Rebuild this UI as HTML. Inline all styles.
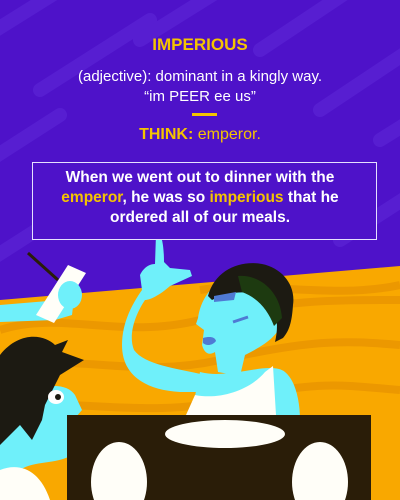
<!DOCTYPE html>
<html><head><meta charset="utf-8"><style>
body{margin:0;width:400px;height:500px;overflow:hidden;background:#4e12c9;font-family:"Liberation Sans",sans-serif;position:relative}
.t{position:absolute;left:0;width:400px;text-align:center;font-weight:bold}
</style></head><body>
<svg width="400" height="500" style="position:absolute;left:0;top:0">
<g stroke="#5a22d4" stroke-width="14" stroke-linecap="round" opacity="0.8">
<line x1="-20" y1="40" x2="60" y2="-10"/><line x1="40" y1="90" x2="150" y2="20"/><line x1="140" y1="40" x2="220" y2="-10"/><line x1="260" y1="50" x2="350" y2="-10"/><line x1="320" y1="110" x2="410" y2="50"/><line x1="-10" y1="160" x2="60" y2="115"/><line x1="340" y1="240" x2="410" y2="195"/><line x1="-10" y1="260" x2="40" y2="228"/><line x1="380" y1="140" x2="420" y2="115"/>
</g>
<polygon points="0,300 400,266 400,500 0,500" fill="#f9a800"/>
<g stroke="#ec9800" stroke-width="8" fill="none">
<path d="M0,330 C60,310 120,340 200,320 S330,300 400,300"/>
<path d="M0,370 C70,350 130,380 220,360 S340,340 400,345"/>
<path d="M0,410 C70,395 140,420 230,400 S340,385 400,390"/>
<path d="M200,290 C260,280 330,300 400,285"/>
</g>
<!-- waiter arm with paper -->
<path d="M0,305 L60,300 L75,290 L72,315 L55,320 L0,322Z" fill="#6ff0fa"/>
<line x1="28" y1="253" x2="58" y2="280" stroke="#2a1d08" stroke-width="3"/>
<polygon points="68,265 86,273 54,323 36,315" fill="#fffef8"/>
<ellipse cx="70" cy="295" rx="12" ry="14" fill="#6ff0fa"/>
<!-- emperor arm -->
<path d="M156,234 C160,230 164,240 164,262 L170,268 L190,270 L192,276 L170,286 C160,295 150,300 145,300 C135,315 128,335 134,350 C145,365 175,368 205,375 L215,392 L180,392 C145,390 122,375 122,345 C122,320 135,300 142,290 L140,275 C145,265 152,264 155,264 Z" fill="#6ff0fa"/>
<!-- body -->
<path d="M200,372 C230,380 270,360 285,372 C295,380 300,400 300,420 L190,420Z" fill="#6ff0fa"/>
<path d="M265,372 L273,366 L276,415 L186,415 L195,395 C220,400 250,390 265,372Z" fill="#fffef8"/>
<!-- head -->
<path d="M215,285 C205,295 200,305 198,318 L196,324 L204,330 L202,345 C205,355 210,355 215,352 L218,372 L240,376 L245,355 C265,345 280,335 282,320 C285,300 270,285 250,283Z" fill="#6ff0fa"/>
<path d="M208,296 C215,270 240,260 262,264 C282,268 296,285 293,305 C292,320 290,330 283,338 L275,342 C279,325 277,310 268,300 C258,292 235,288 212,300Z" fill="#1c1a12"/>
<path d="M238,276 C258,274 280,290 282,318 L274,326 C268,310 258,298 242,292Z" fill="#1d3a10"/>
<path d="M214,296 L236,292 L234,300 L214,302Z" fill="#4f7ad4"/>
<path d="M233,322 L248,317" stroke="#4f7ad4" stroke-width="3"/>
<path d="M203,338 C210,336 215,337 216,341 C212,346 206,346 203,343Z" fill="#4f7ad4"/>
<!-- left man -->
<path d="M20,400 C35,385 65,380 75,395 L82,410 L75,418 L80,440 L72,455 C55,465 35,460 20,470 L0,470 L0,420Z" fill="#6ff0fa"/>
<path d="M0,355 C20,330 45,335 55,345 L68,340 L62,352 L84,360 L60,375 L50,395 L45,405 L42,420 L32,440 L20,425 L0,445Z" fill="#1c1a12"/>
<ellipse cx="56" cy="397" rx="8" ry="7" fill="#fff"/>
<circle cx="58" cy="397" r="3" fill="#1c1a12"/>
<path d="M0,470 C20,462 40,470 50,500 L0,500Z" fill="#fffef8"/>
<!-- table -->
<rect x="67" y="415" width="304" height="85" fill="#2a1d08"/>
<ellipse cx="225" cy="434" rx="60" ry="14" fill="#fffef8"/>
<ellipse cx="119" cy="482" rx="28" ry="40" fill="#fffef8"/>
<ellipse cx="320" cy="482" rx="28" ry="40" fill="#fffef8"/>
<rect x="32.5" y="162.5" width="344" height="77" fill="#4e12c9" stroke="#e6e0ff" stroke-width="1"/>
<rect x="192" y="113" width="25" height="3" fill="#f5c400"/>
</svg>
<div class="t" style="top:35px;font-size:17px;color:#f5c400">IMPERIOUS</div>
<div class="t" style="top:67px;font-size:15px;color:#fff;font-weight:normal;line-height:20px">(adjective): dominant in a kingly way.<br>“im PEER ee us”</div>
<div class="t" style="top:126px;font-size:16px;color:#f5c400;font-weight:normal"><b>THINK:</b> emperor.</div>
<div class="t" style="top:168px;font-size:15.5px;color:#fff;line-height:20px">When we went out to dinner with the<br><span style="color:#f5c400">emperor</span>, he was so <span style="color:#f5c400">imperious</span> that he<br>ordered all of our meals.</div>
</body></html>
